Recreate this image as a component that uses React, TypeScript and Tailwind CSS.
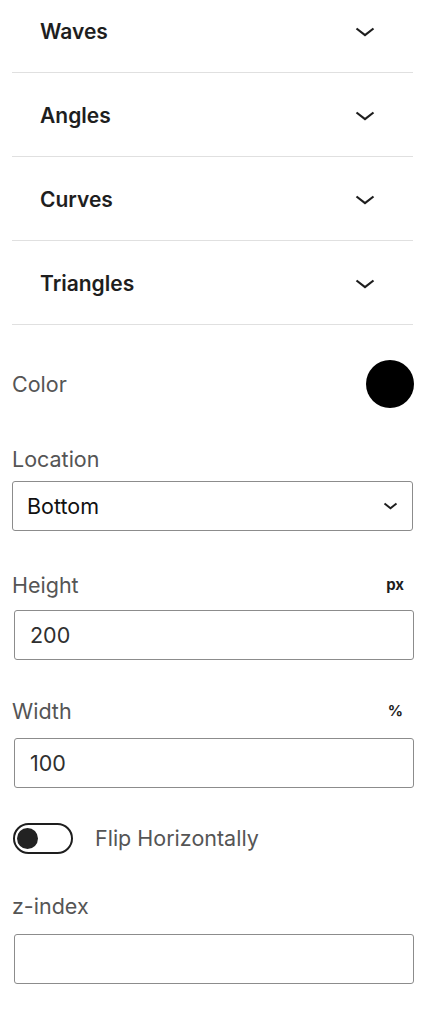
const sections = ["Waves", "Angles", "Curves", "Triangles"]

function Chevron() {
  return (
    <svg width="20" height="10" viewBox="0 0 20 10" fill="none">
      <polyline points="1.5,1.5 10,8.2 18.5,1.5" stroke="#1e1e1e" strokeWidth="2.2" />
    </svg>
  )
}

function TextField({ value }: { value?: string }) {
  return (
    <div className="ml-[2px] flex h-[50px] items-center rounded-[3px] border border-[#8c8c8c] pl-[15px] text-[21.5px] text-[#2f2f2f]">
      {value}
    </div>
  )
}

export default function App() {
  return (
    <div className="w-[424px] bg-white pl-[12px] pr-[10px] pb-[41px] font-['Inter','Noto_Sans',sans-serif]">
      {/* Shape sections */}
      <div className="mr-[1px]">
        {sections.map((name, i) => (
          <div
            key={name}
            className={`flex items-center justify-between border-b border-[#e0e0e0] pl-[28px] pr-[38px] ${
              i === 0 ? "h-[73px] pb-[9px]" : "h-[84px] pt-[2px]"
            }`}
          >
            <span className="text-[21px] font-semibold text-[#1e1e1e]">{name}</span>
            <Chevron />
          </div>
        ))}
      </div>

      {/* Color */}
      <div className="mt-[35px] flex h-[48px] items-center justify-between">
        <span className="text-[21.5px] text-[#555]">Color</span>
        <div className="size-[48px] rounded-full bg-black" />
      </div>

      {/* Location */}
      <div className="mt-[38px] text-[21.5px] leading-[26px] text-[#555]">Location</div>
      <div className="mr-[1px] mt-[9px] flex h-[50px] items-center justify-between rounded-[3px] border border-[#8c8c8c] pl-[14px] pr-[14px] text-[21.5px] text-[#111]">
        <span>Bottom</span>
        <svg width="15" height="8" viewBox="0 0 15 8" fill="none">
          <polyline points="1.5,1.5 7.5,6.2 13.5,1.5" stroke="#1e1e1e" strokeWidth="2" />
        </svg>
      </div>

      {/* Height */}
      <div className="mt-[41px] flex h-[26px] items-center justify-between pr-[10px]">
        <span className="text-[21.5px] text-[#555]">Height</span>
        <span className="text-[15px] font-bold text-[#1e1e1e]">px</span>
      </div>
      <div className="mt-[12px]">
        <TextField value="200" />
      </div>

      {/* Width */}
      <div className="mt-[38px] flex h-[26px] items-center justify-between pr-[11px]">
        <span className="text-[21.5px] text-[#555]">Width</span>
        <span className="text-[15px] font-bold text-[#1e1e1e]">%</span>
      </div>
      <div className="mt-[14px]">
        <TextField value="100" />
      </div>

      {/* Flip */}
      <div className="mt-[34px] flex items-center gap-[22px]">
        <div className="ml-[1px] flex h-[31px] w-[60px] items-center rounded-full border-2 border-[#1e1e1e] pl-[2px]">
          <div className="size-[21px] rounded-full bg-[#222]" />
        </div>
        <span className="text-[21.5px] text-[#555]">Flip Horizontally</span>
      </div>

      {/* z-index */}
      <div className="mt-[39px] text-[21.5px] leading-[26px] text-[#555]">z-index</div>
      <div className="mt-[15px]">
        <TextField />
      </div>
    </div>
  )
}
